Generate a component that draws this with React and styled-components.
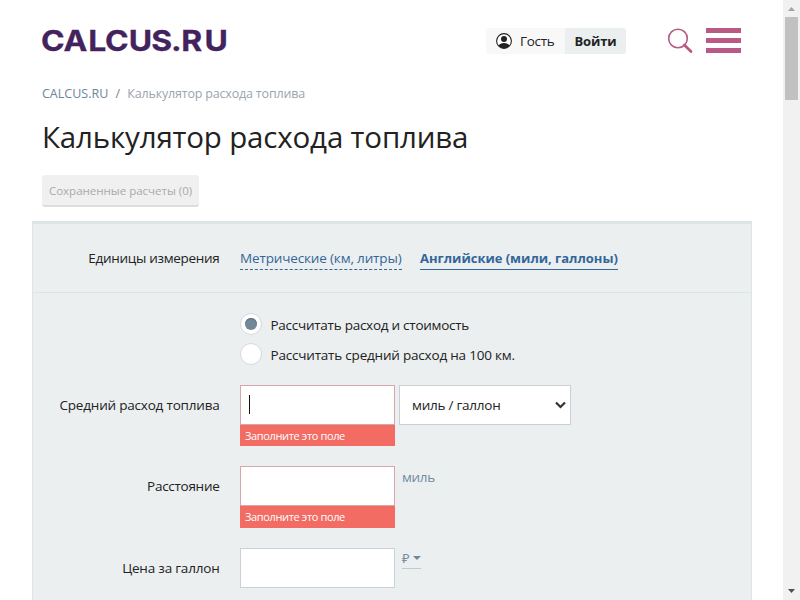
import React from "react";
import styled, { createGlobalStyle } from "styled-components";

const Global = createGlobalStyle`
  * { box-sizing: border-box; }
  html, body { margin: 0; height: 600px; overflow: hidden; background: #fff; }
  body { font-family: "Open Sans", "Noto Sans", sans-serif; font-size: 13.5px; color: #222; }
`;

const Screen = styled.div`
  display: flex;
  width: 800px;
  height: 600px;
  overflow: hidden;
`;
const Page = styled.main`
  width: 783px;
  padding: 26px 31px 0 32px;
`;
const Text = styled.span`
  white-space: nowrap;
  letter-spacing: ${(p) => p.$track || 0}px;
`;
const Header = styled.header`
  display: flex;
  height: 30px;
  padding: 0 10px;
  align-items: center;
`;
const Logo = styled.svg`
  width: 186px;
  height: 30px;
  overflow: visible;
  text {
    font: 700 29px Inter, sans-serif;
    fill: #43235e;
    stroke: #43235e;
    stroke-width: 0.3px;
  }
`;
const Account = styled.div`
  display: flex;
  height: 26px;
  margin-left: 258px;
  border-radius: 3px;
  overflow: hidden;
  line-height: 26px;
`;
const Guest = styled.div`
  display: flex;
  align-items: center;
  width: 79px;
  padding-left: 10px;
  gap: 8px;
  background: #f8f8f8;
`;
const Login = styled.div`
  width: 61px;
  text-align: center;
  font-size: 13px;
  font-weight: 700;
  background: #ebeff0;
`;
const SearchIcon = styled.svg`
  width: 26px;
  height: 26px;
  margin-left: 41px;
`;
const Burger = styled.div`
  display: grid;
  gap: 5px;
  width: 35px;
  height: 25px;
  margin: 0 0 1px 13px;
`;
const BurgerBar = styled.span`
  height: 5px;
  background: #b85a84;
`;
const Crumbs = styled.nav`
  display: flex;
  margin: 28px 10px 0;
  height: 20px;
  line-height: 20px;
  font-size: 12.5px;
  color: #6f8597;
`;
const Slash = styled.span`
  width: 19px;
  text-align: center;
`;
const Current = styled(Text)`
  color: #9aa5ae;
`;
const Title = styled.h1`
  margin: 11px 10px 0;
  height: 44px;
  line-height: 44px;
  font-size: 29.5px;
  font-weight: 400;
`;
const Saved = styled.div`
  width: 157px;
  height: 32px;
  margin: 16px 10px 0;
  border-radius: 3px;
  border-bottom: 2px solid #ddd;
  background: #f0f0f0;
  color: #aaa;
  font-size: 11.6px;
  line-height: 31px;
  text-align: center;
`;
const Form = styled.section`
  width: 720px;
  height: 500px;
  margin-top: 14px;
  border: 1px solid #dde5e6;
  border-top-width: 3px;
  background: #ebeff0;
`;
const Row = styled.div`
  display: grid;
  grid-template-columns: 186.5px 1fr;
  column-gap: 20.5px;
  height: ${(p) => p.$height}px;
`;
const UnitsRow = styled(Row)`
  border-bottom: 1px solid #dde2e4;
`;
const Label = styled.label`
  text-align: right;
  line-height: ${(p) => p.$line || 40}px;
`;
const Links = styled.div`
  display: flex;
  align-items: flex-start;
  gap: 18px;
  padding-top: 24px;
`;
const UnitLink = styled.a`
  width: ${(p) => p.$width}px;
  height: 22px;
  line-height: 20px;
  white-space: nowrap;
  color: #336699;
  font-size: ${(p) => (p.$active ? 13 : 13.5)}px;
  font-weight: ${(p) => (p.$active ? 700 : 400)};
  border-bottom: 1px ${(p) => (p.$active ? "solid" : "dashed")} #336699;
`;
const Radios = styled.div`
  display: grid;
  grid-template-rows: 22px 22px;
  gap: 8px;
  padding: 20px 0 0 207px;
  height: 92px;
`;
const Option = styled.label`
  display: flex;
  gap: 8.5px;
  line-height: 24px;
`;
const Dot = styled.span`
  display: grid;
  place-items: center;
  width: 22px;
  height: 22px;
  border: 1px solid #d5dadd;
  border-radius: 50%;
  background: #fff;
  &::after {
    content: "";
    width: 12px;
    height: 12px;
    border-radius: 50%;
    background: ${(p) => (p.$on ? "#748998" : "transparent")};
    box-shadow: ${(p) => (p.$on ? "inset 0 1px 1px #596b78" : "none")};
  }
`;
const Controls = styled.div`
  display: flex;
  align-items: flex-start;
`;
const Field = styled.div`
  width: 155px;
`;
const Input = styled.div`
  display: flex;
  align-items: center;
  height: 40px;
  padding-left: 8px;
  border: 1px solid ${(p) => (p.$invalid ? "#d8a5a8" : "#c9d0d6")};
  background: #fff;
`;
const Caret = styled.span`
  width: 1px;
  height: 19px;
  margin-bottom: 1px;
  background: #111;
`;
const Error = styled.div`
  height: ${(p) => p.$height}px;
  padding-left: 5px;
  line-height: 22px;
  background: #f26c63;
  color: #fff;
  font-size: 11px;
`;
const Select = styled.div`
  display: flex;
  align-items: center;
  justify-content: space-between;
  width: 172px;
  height: 40px;
  margin-left: 4px;
  padding: 0 4px 0 12px;
  border: 1px solid #c9d0d6;
  background: #fff;
  line-height: 38px;
`;
const Unit = styled.span`
  margin-left: 7px;
  line-height: 22px;
  color: #748ba0;
`;
const Currency = styled(Unit)`
  display: flex;
  align-items: center;
  gap: 3px;
  width: 19px;
  height: 21px;
  border-bottom: 1px solid #c5c9cc;
  font-size: 13px;
`;
const Scrollbar = styled.aside`
  display: flex;
  flex-direction: column;
  align-items: center;
  width: 17px;
  background: #f1f1f1;
`;
const Arrow = styled.svg`
  width: 17px;
  height: 17px;
`;
const Thumb = styled.div`
  width: 13px;
  height: 83px;
  margin-bottom: auto;
  background: #c1c1c1;
`;

function FormField({ label, track, height, error, caret, children }) {
  return (
    <Row $height={height}>
      <Label><Text $track={track}>{label}</Text></Label>
      <Controls>
        <Field>
          <Input $invalid={!!error}>{caret && <Caret />}</Input>
          {error && <Error $height={error}><Text $track={-0.36}>Заполните это поле</Text></Error>}
        </Field>
        {children}
      </Controls>
    </Row>
  );
}

export default function App() {
  return (
    <Screen>
      <Global />
      <Page>
        <Header>
          <Logo viewBox="0 0 186 30">
            <text transform="scale(1.1 1)" x="-1 19.5 42.1 57.2 78.8 99.4 117.2 126.7 147.8" y="25">CALCUS.RU</text>
          </Logo>
          <Account>
            <Guest>
              <svg width="16" height="16" viewBox="0 0 16 16">
                <circle cx="8" cy="8" r="7.4" fill="#fff" stroke="#222" strokeWidth="1.1" />
                <circle cx="8" cy="6" r="3" fill="#222" />
                <path d="M2.5 12.7Q4 10.1 8 10.1T13.5 12.7Q11.5 15.2 8 15.2T2.5 12.7Z" fill="#222" />
              </svg>
              <Text $track={-0.3}>Гость</Text>
            </Guest>
            <Login><Text $track={-0.1}>Войти</Text></Login>
          </Account>
          <SearchIcon viewBox="0 0 26 26" fill="none" stroke="#b85a84">
            <circle cx="11" cy="10.5" r="9.3" strokeWidth="1.6" />
            <path d="M17.3 17L24 23.5" strokeWidth="2.8" strokeLinecap="round" />
          </SearchIcon>
          <Burger><BurgerBar /><BurgerBar /><BurgerBar /></Burger>
        </Header>
        <Crumbs>
          <Text>CALCUS.RU</Text><Slash>/</Slash>
          <Current $track={-0.18}>Калькулятор расхода топлива</Current>
        </Crumbs>
        <Title><Text $track={-0.17}>Калькулятор расхода топлива</Text></Title>
        <Saved><Text $track={-0.05}>Сохраненные расчеты (0)</Text></Saved>
        <Form>
          <UnitsRow $height={69}>
            <Label $line={68}><Text $track={-0.3}>Единицы измерения</Text></Label>
            <Links>
              <UnitLink $width={162}><Text $track={-0.15}>Метрические (км, литры)</Text></UnitLink>
              <UnitLink $width={198} $active><Text $track={-0.03}>Английские (мили, галлоны)</Text></UnitLink>
            </Links>
          </UnitsRow>
          <Radios>
            <Option><Dot $on /><Text $track={-0.26}>Рассчитать расход и стоимость</Text></Option>
            <Option><Dot /><Text $track={-0.2}>Рассчитать средний расход на 100 км.</Text></Option>
          </Radios>
          <FormField label="Средний расход топлива" track={-0.2} height={81} error={21} caret>
            <Select>
              <Text $track={-0.24}>миль / галлон</Text>
              <svg width="11" height="8" viewBox="0 0 11 8" fill="none" stroke="#333" strokeWidth="2.2">
                <path d="M1 1.5L5.5 6L10 1.5" />
              </svg>
            </Select>
          </FormField>
          <FormField label="Расстояние" track={-0.28} height={82} error={22}>
            <Unit><Text $track={-0.35}>миль</Text></Unit>
          </FormField>
          <FormField label="Цена за галлон" track={-0.2} height={80}>
            <Currency>
              ₽
              <svg width="8" height="4" viewBox="0 0 8 4"><path d="M0 0H8L4 4Z" fill="#6f8799" /></svg>
            </Currency>
          </FormField>
        </Form>
      </Page>
      <Scrollbar>
        <Arrow viewBox="0 0 17 17"><path d="M5 11H12L8.5 7Z" fill="#a3a3a3" /></Arrow>
        <Thumb />
        <Arrow viewBox="0 0 17 17"><path d="M5 6H12L8.5 10Z" fill="#505050" /></Arrow>
      </Scrollbar>
    </Screen>
  );
}
